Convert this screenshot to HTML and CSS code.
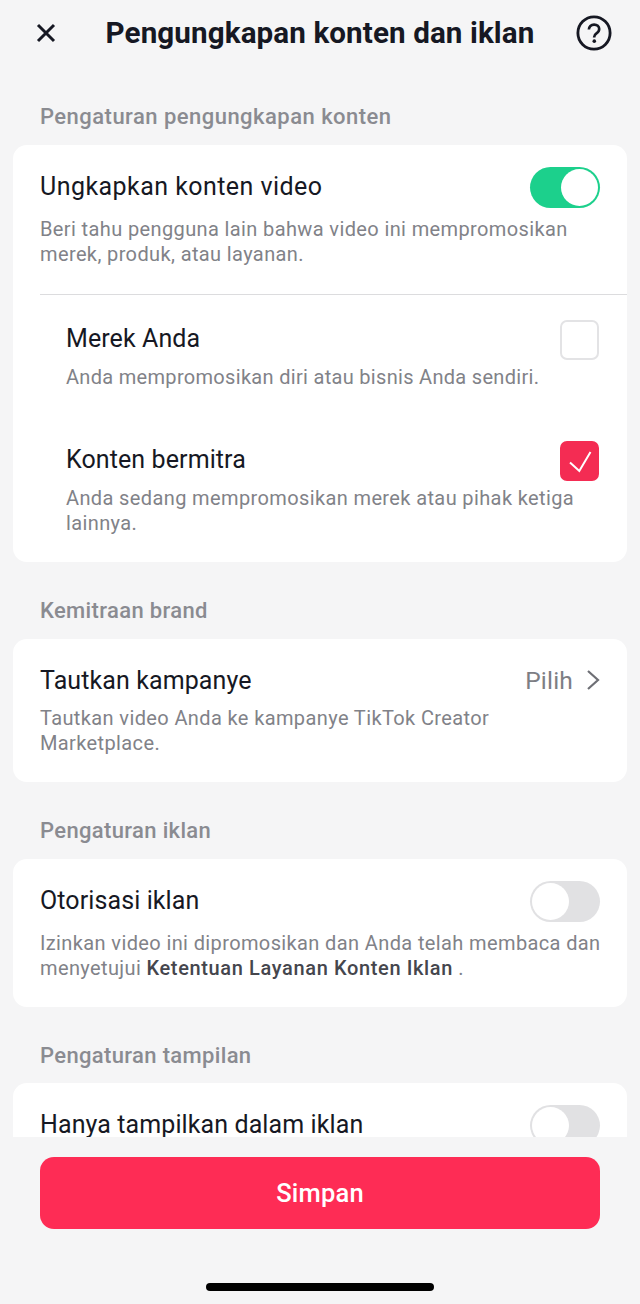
FILE: index.html
```html
<!DOCTYPE html>
<html lang="id">
<head>
<meta charset="utf-8">
<title>Pengungkapan konten dan iklan</title>
<link rel="stylesheet" href="styles.css">
</head>
<body>
<div class="screen">
  <div class="content">
    <header class="nav">
      <svg class="nav-close" width="24" height="24" viewBox="0 0 24 24"><path d="M4 4L20 20M20 4L4 20" fill="none" stroke="#161823" stroke-width="3"/></svg>
      <h1 class="nav-title">Pengungkapan konten dan iklan</h1>
      <svg class="nav-help" width="36" height="36" viewBox="0 0 38 38"><circle cx="19" cy="19" r="17" fill="none" stroke="#161823" stroke-width="3"/><path d="M13.600 15.400c0-3.200 2.400-5.300 5.500-5.300s5.400 2 5.400 4.800c0 2.200-1.200 3.400-2.900 4.500-1.500 1-2.400 1.900-2.400 3.700v.7" fill="none" stroke="#161823" stroke-width="2.800"/><circle cx="19.300" cy="27.600" r="1.900" fill="#161823"/></svg>
    </header>

    <h2 class="section-label first">Pengaturan pengungkapan konten</h2>
    <section class="card">
      <div class="row">
        <span class="row-title wide">Ungkapkan konten video</span>
        <span class="toggle on"><span class="knob"></span></span>
      </div>
      <p class="desc">Beri tahu pengguna lain bahwa video ini mempromosikan merek, produk, atau layanan.</p>
      <div class="divider"></div>
      <div class="sub sub-brand">
        <div class="row">
          <span class="row-title">Merek Anda</span>
          <span class="check"></span>
        </div>
        <p class="desc">Anda mempromosikan diri atau bisnis Anda sendiri.</p>
      </div>
      <div class="sub sub-partner">
        <div class="row">
          <span class="row-title">Konten bermitra</span>
          <span class="check checked"><svg width="24" height="24" viewBox="0 0 24 24"><path d="M2 13.500L11.300 22L22.500 3" fill="none" stroke="#fff" stroke-width="2"/></svg></span>
        </div>
        <p class="desc">Anda sedang mempromosikan merek atau pihak ketiga lainnya.</p>
      </div>
    </section>

    <h2 class="section-label">Kemitraan brand</h2>
    <section class="card card-link">
      <div class="row">
        <span class="row-title">Tautkan kampanye</span>
        <span class="pick">Pilih<svg width="14" height="22" viewBox="0 0 14 22"><path d="M2 2L12 11L2 20" fill="none" stroke="#6e6f75" stroke-width="2.200"/></svg></span>
      </div>
      <p class="desc">Tautkan video Anda ke kampanye TikTok Creator Marketplace.</p>
    </section>

    <h2 class="section-label">Pengaturan iklan</h2>
    <section class="card">
      <div class="row">
        <span class="row-title">Otorisasi iklan</span>
        <span class="toggle"><span class="knob"></span></span>
      </div>
      <p class="desc desc-ad">Izinkan video ini dipromosikan dan Anda telah membaca dan menyetujui <strong>Ketentuan Layanan Konten Iklan</strong> .</p>
    </section>

    <h2 class="section-label tight">Pengaturan tampilan</h2>
    <section class="card">
      <div class="row">
        <span class="row-title">Hanya tampilkan dalam iklan</span>
        <span class="toggle"><span class="knob"></span></span>
      </div>
    </section>
  </div>

  <footer class="footer">
    <button class="save" type="button">Simpan</button>
    <div class="home-bar"></div>
  </footer>
</div>
</body>
</html>
```

FILE: styles.css
```css
* { box-sizing: border-box; }
html, body { margin: 0; padding: 0; }
body {
  background: #f5f5f6;
  font-family: Roboto, "Liberation Sans", sans-serif;
  color: #161823;
}
.screen { width: 640px; height: 1304px; display: flex; flex-direction: column; overflow: hidden; }
.content { height: 1137px; overflow: hidden; flex: none; }

.nav { height: 66px; position: relative; display: flex; align-items: center; justify-content: center; }
.nav-close { position: absolute; left: 34px; top: 21px; }
.nav-help { position: absolute; left: 576px; top: 15px; }
.nav-title { margin: 0; font-size: 29.600px; font-weight: 700; line-height: 66px; letter-spacing: 0.1px; }

.section-label {
  margin: 0;
  padding: 36px 40px 15px;
  font-size: 22px;
  line-height: 26px;
  font-weight: 500;
  color: #8a8b91;
  letter-spacing: 0.35px;
}
.section-label.first { padding-top: 38px; letter-spacing: 0.47px; }
.section-label.tight { padding-bottom: 14px; }

.card {
  margin: 0 13px;
  padding: 22px 27px 26px;
  background: #fff;
  border-radius: 14px;
}
.row { display: flex; align-items: center; justify-content: space-between; min-height: 41px; }
.row-title { font-size: 25px; line-height: 30px; padding-bottom: 2px; color: #161823; letter-spacing: 0.1px; }
.row-title.wide { letter-spacing: 0.45px; }
.desc {
  margin: 9px 0 0;
  font-size: 20px;
  line-height: 25px;
  color: #818288;
  letter-spacing: 0.38px;
}
.desc strong { font-weight: 500; color: #45464d; letter-spacing: 0.63px; }
.desc-ad { margin-right: -4px; }

.toggle { width: 70px; height: 41px; border-radius: 21px; background: #e1e1e3; padding: 2px; display: flex; flex: none; }
.toggle .knob { width: 37px; height: 37px; border-radius: 50%; background: #fff; }
.toggle.on { background: #1cd08c; justify-content: flex-end; }

.divider { height: 1px; background: #dcdcde; margin: 27px -27px 0 0; }
.sub { padding-left: 26px; }
.sub .row { padding-right: 1px; min-height: 40px; }
.sub .row-title { padding-bottom: 2px; }
.sub .desc { margin-top: 5px; }
.sub-brand { margin-top: 25px; }
.sub-brand .desc { letter-spacing: 0.31px; }
.sub-partner { margin-top: 51px; }

.check {
  width: 39px; height: 40px; flex: none;
  border: 2px solid #e3e3e5; border-radius: 7px;
  display: flex; align-items: center; justify-content: center;
}
.check.checked { background: #f42c53; border-color: #f42c53; }

.card-link { padding-bottom: 26px; }
.card-link .row { min-height: 40px; }
.card-link .row-title { padding-bottom: 0; }
.card-link .desc { margin-top: 5px; }
.pick { display: flex; align-items: center; gap: 13px; padding-bottom: 2px; font-size: 24.500px; color: #7d7e84; letter-spacing: 0.2px; }

.footer { flex: 1; padding: 20px 40px 0; position: relative; }
.save {
  display: block;
  width: 560px; height: 72px;
  border: 0; border-radius: 14px;
  background: #fe2c55; color: #fff;
  font-family: inherit; font-size: 25.500px; font-weight: 500; letter-spacing: 0.2px;
}
.home-bar { width: 228px; height: 8px; border-radius: 4px; background: #000; margin: 54px auto 0; }
```
